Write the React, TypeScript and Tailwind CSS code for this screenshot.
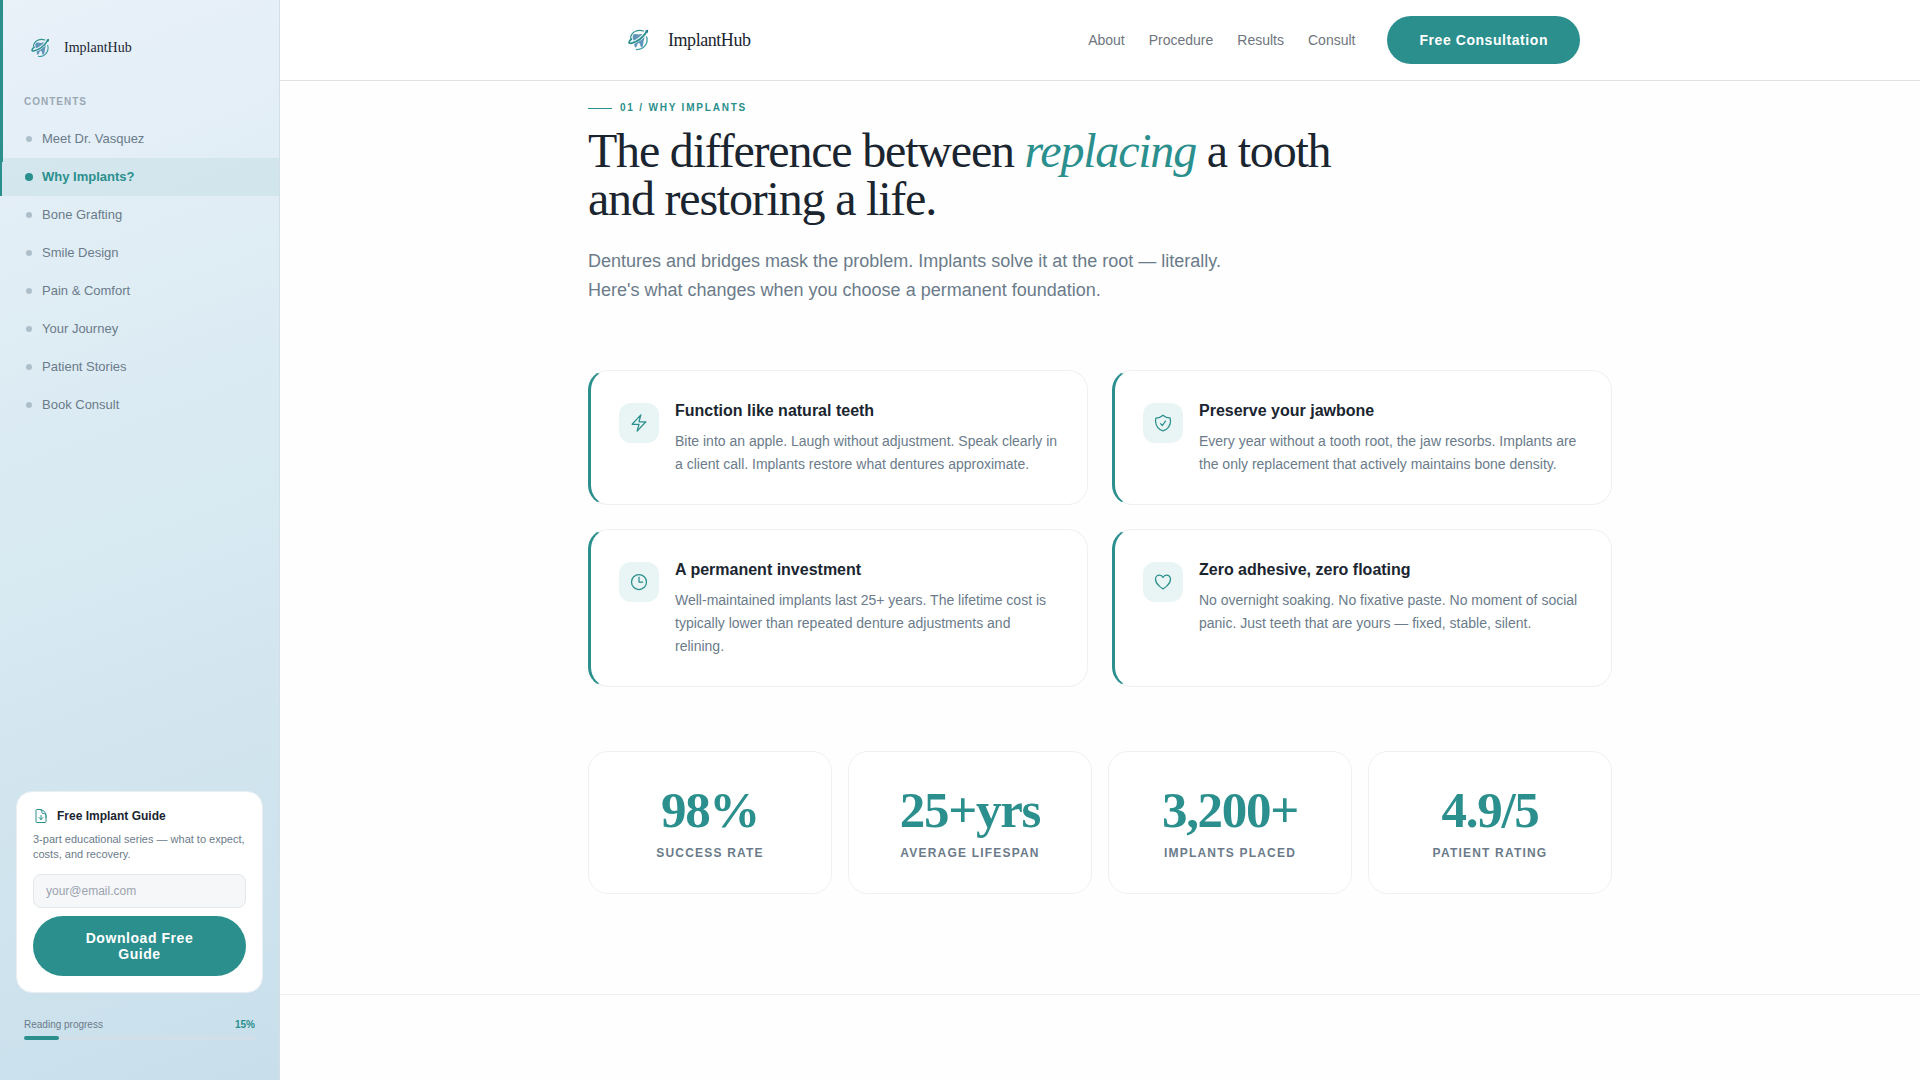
import React from 'react';
import {
  HiOutlineBolt,
  HiOutlineClock,
  HiOutlineDocumentArrowDown,
  HiOutlineHeart,
  HiOutlineShieldCheck,
} from 'react-icons/hi2';

const SECTIONS = [
  'Meet Dr. Vasquez',
  'Why Implants?',
  'Bone Grafting',
  'Smile Design',
  'Pain & Comfort',
  'Your Journey',
  'Patient Stories',
  'Book Consult',
];

const NAV = ['About', 'Procedure', 'Results', 'Consult'];

const BENEFITS = [
  {
    icon: HiOutlineBolt,
    title: 'Function like natural teeth',
    text: 'Bite into an apple. Laugh without adjustment. Speak clearly in a client call. Implants restore what dentures approximate.',
  },
  {
    icon: HiOutlineShieldCheck,
    title: 'Preserve your jawbone',
    text: 'Every year without a tooth root, the jaw resorbs. Implants are the only replacement that actively maintains bone density.',
  },
  {
    icon: HiOutlineClock,
    title: 'A permanent investment',
    text: 'Well-maintained implants last 25+ years. The lifetime cost is typically lower than repeated denture adjustments and relining.',
  },
  {
    icon: HiOutlineHeart,
    title: 'Zero adhesive, zero floating',
    text: 'No overnight soaking. No fixative paste. No moment of social panic. Just teeth that are yours — fixed, stable, silent.',
  },
];

const STATS = [
  { value: '98%', label: 'Success rate' },
  { value: '25+yrs', label: 'Average lifespan' },
  { value: '3,200+', label: 'Implants placed' },
  { value: '4.9/5', label: 'Patient rating' },
];

// Tooth inside a circle, with an orbit swoosh crossing it
const LogoMark = ({ size }: { size: number }) => (
  <svg width={size} height={size} viewBox="0 0 36 36" fill="none" aria-hidden="true">
    <path
      d="M13 13c1.500-1.800 3.800-1 5.500-.5 1.800-.5 4-1.200 5.300.6 1.200 2 .4 4-.2 6-.4 2.600-.5 6.200-1.900 6.400-1.500.2-1.100-4.500-2.900-4.500s-1.700 4.700-3.200 4.500c-1.500-.2-1.200-3.900-1.700-5.900-.5-1.900-1.900-4.500-.9-6.600z"
      fill="#5f95b8"
    />
    <path d="M10.500 16C11.500 9.500 18.500 7 23.500 9" stroke="#2f9290" strokeWidth="1.200" strokeLinecap="round" />
    <path d="M26.700 15c1.700 6-2.600 13-10.300 12.500" stroke="#3f9fa5" strokeWidth="1.300" strokeLinecap="round" />
    <path d="M10 19.500c1 2.200 4.500.8 7.500-1.100 4-2.500 7.200-5.600 9.500-9.400" stroke="#e8f5f8" strokeWidth="3.400" strokeLinecap="round" />
    <path d="M11.500 17c-3.500 2.600-3.200 5 .2 4.200 6-1.500 11.800-6.600 15.300-12" stroke="#2a8f8d" strokeWidth="1.800" strokeLinecap="round" />
    <path d="M24.900 9l3.300-1.500-.6 3.600z" fill="#1f7a86" />
  </svg>
);

const Sidebar: React.FC<{ active: string; progress: number }> = ({ active, progress }) => (
  <aside className="sticky top-0 flex h-screen w-[280px] shrink-0 flex-col border-r border-[#d3dfe7] bg-[linear-gradient(160deg,#e9f1f9_0%,#d9eaf2_45%,#c8dfeb_100%)]">
    {/* page scroll marker on the left edge */}
    <div className="absolute left-0 top-0 w-[3px] bg-[#2a8f8d]" style={{ height: `${progress}%` }} />

    <a href="#top" className="flex items-center gap-2 px-6 pt-8">
      <LogoMark size={32} />
      <span className="font-['Liberation_Serif',serif] text-sm text-[#1a2530]">ImplantHub</span>
    </a>

    <h2 className="mt-[30px] px-6 text-[10px] font-bold uppercase leading-4 tracking-widest text-[#9aa8b5]">Contents</h2>

    <nav className="mt-[10px]">
      {SECTIONS.map((name) => {
        const isActive = name === active;
        return (
          <a
            key={name}
            href="#section"
            className={`flex h-[38px] items-center gap-2 border-l-2 pl-[22px] text-[13px] ${
              isActive
                ? 'border-[#2a8f8d] bg-[#2a8f8d]/8 font-bold text-[#2a8f8d]'
                : 'border-transparent text-[#6b7b8a]'
            }`}
          >
            <span className="flex w-[10px] justify-center">
              <span className={isActive ? 'size-2 rounded-full bg-[#2a8f8d]' : 'size-[6px] rounded-full bg-[#adbfca]'} />
            </span>
            {name}
          </a>
        );
      })}
    </nav>

    <form className="mx-4 mt-auto rounded-2xl border border-[#e8eef2] bg-white p-4" onSubmit={(e) => e.preventDefault()}>
      <div className="flex items-center gap-2">
        <HiOutlineDocumentArrowDown size={16} className="text-[#2a8f8d]" />
        <h3 className="text-xs font-bold text-[#1a2530]">Free Implant Guide</h3>
      </div>
      <p className="mt-2 text-[11px] leading-[15px] text-[#6b7b8a]">
        3-part educational series — what to expect, costs, and recovery.
      </p>
      <input
        type="email"
        aria-label="Email address"
        placeholder="your@email.com"
        className="mt-3 h-[34px] w-full rounded-lg border border-[#e2e8ec] bg-[#f5f7f9] px-3 text-xs text-[#1a2530] placeholder:text-[#9ca3af]"
      />
      <button
        type="submit"
        className="mt-2 w-full rounded-full bg-[#2a8f8d] px-8 py-[14px] text-sm font-bold leading-4 tracking-[0.04em] text-white"
      >
        Download Free Guide
      </button>
    </form>

    <div className="mb-10 mt-6 px-6">
      <div className="flex justify-between text-[10px] leading-4">
        <span className="text-[#6b7b8a]">Reading progress</span>
        <span className="font-bold text-[#2a8f8d]">{progress}%</span>
      </div>
      <div className="mt-[3px] h-1 rounded-full bg-[#d3dfe8]">
        <div className="h-full rounded-full bg-[#2a8f8d]" style={{ width: `${progress}%` }} />
      </div>
    </div>
  </aside>
);

const Header = () => (
  <header className="border-b border-[#dfe2e5] bg-white">
    <div className="mx-auto flex h-20 max-w-[1024px] items-center justify-between px-8">
      <a href="#top" className="flex items-center gap-3">
        <LogoMark size={36} />
        <span className="font-['Liberation_Serif',serif] text-lg tracking-tight text-[#1a2530]">ImplantHub</span>
      </a>
      <div className="flex items-center gap-8">
        <nav className="flex gap-6 text-sm text-[#6f757e]">
          {NAV.map((item) => (
            <a key={item} href="#section">
              {item}
            </a>
          ))}
        </nav>
        <button type="button" className="h-12 rounded-full bg-[#2a8f8d] px-8 text-sm font-bold tracking-[0.04em] text-white">
          Free Consultation
        </button>
      </div>
    </div>
  </header>
);

const WhyImplants = () => (
  <section className="border-b border-[#eef1f3] pb-[100px] pt-[19px]">
    <div className="mx-auto max-w-[1024px]">
      <div className="flex items-center gap-2">
        <span className="h-px w-6 bg-[#2a8f8d]" />
        <span className="text-[10px] font-bold uppercase leading-4 tracking-[0.18em] text-[#2a8f8d]">01 / Why Implants</span>
      </div>

      <h1 className="mt-[11px] max-w-[768px] font-['Liberation_Serif',serif] text-5xl leading-[48px] tracking-tight text-[#1a2530]">
        The difference between <em className="text-[#2a8f8d]">replacing</em> a tooth and restoring a life.
      </h1>

      <p className="mt-6 max-w-[640px] text-lg leading-[29px] text-[#6b7b8a]">
        Dentures and bridges mask the problem. Implants solve it at the root — literally. Here's what changes when you
        choose a permanent foundation.
      </p>

      <div className="mt-[65px] grid grid-cols-2 gap-6">
        {BENEFITS.map(({ icon: Icon, title, text }) => (
          <div key={title} className="flex gap-4 rounded-[20px] border border-l-[3px] border-[#eef1f3] border-l-[#2a8f8d] bg-white p-7">
            <div className="mt-1 flex size-10 shrink-0 items-center justify-center rounded-xl bg-[#e8f5f4] text-[#2a8f8d]">
              <Icon size={20} />
            </div>
            <div>
              <h3 className="text-base font-bold leading-[23px] text-[#1a2530]">{title}</h3>
              <p className="mt-2 text-sm leading-[23px] text-[#6b7b8a]">{text}</p>
            </div>
          </div>
        ))}
      </div>

      <div className="mt-16 grid grid-cols-4 gap-4">
        {STATS.map(({ value, label }) => (
          <div key={label} className="rounded-[20px] border border-[#eef1f3] bg-white px-4 py-8 text-center">
            <div className="font-['Liberation_Serif',serif] text-[51px] font-bold leading-[53px] tracking-tight text-[#2a8f8d]">{value}</div>
            <div className="mt-2 text-xs font-bold uppercase tracking-widest text-[#6b7b8a]">{label}</div>
          </div>
        ))}
      </div>
    </div>
  </section>
);

export default function App() {
  return (
    <div className="flex min-h-screen bg-[#fefefe] font-['Liberation_Sans',Arial,sans-serif]">
      <Sidebar active="Why Implants?" progress={15} />
      <main className="min-w-0 flex-1">
        <Header />
        <WhyImplants />
      </main>
    </div>
  );
}
